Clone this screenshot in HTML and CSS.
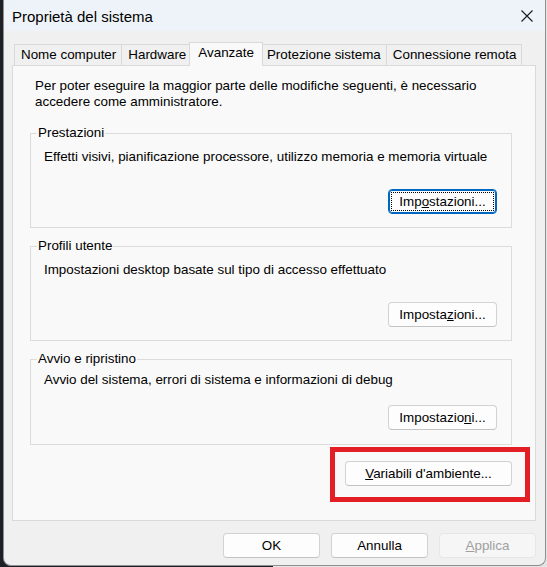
FILE: index.html
```html
<!DOCTYPE html>
<html lang="it">
<head>
<meta charset="utf-8">
<title>Proprietà del sistema</title>
<link rel="stylesheet" href="styles.css">
</head>
<body>
<div class="window">
  <div class="titlebar">
    <span class="title">Proprietà del sistema</span>
    <svg class="close" width="12" height="12" viewBox="0 0 12 12"><path d="M0.5 0.5 L11.5 11.5 M11.5 0.5 L0.5 11.5" stroke="#1a1a1a" stroke-width="1.1" fill="none"/></svg>
  </div>
  <div class="tabs">
    <div class="tab">Nome computer</div>
    <div class="tab">Hardware</div>
    <div class="tab selected">Avanzate</div>
    <div class="tab">Protezione sistema</div>
    <div class="tab">Connessione remota</div>
  </div>
  <div class="panel">
    <p class="intro">Per poter eseguire la maggior parte delle modifiche seguenti, è necessario accedere come amministratore.</p>
    <fieldset class="group">
      <legend>Prestazioni</legend>
      <div class="group-body">
        <p class="desc">Effetti visivi, pianificazione processore, utilizzo memoria e memoria virtuale</p>
        <div class="btn-row"><button class="btn focused">Imp<u>o</u>stazioni...</button></div>
      </div>
    </fieldset>
    <fieldset class="group">
      <legend>Profili utente</legend>
      <div class="group-body">
        <p class="desc">Impostazioni desktop basate sul tipo di accesso effettuato</p>
        <div class="btn-row"><button class="btn">Imposta<u>z</u>ioni...</button></div>
      </div>
    </fieldset>
    <fieldset class="group group-last">
      <legend>Avvio e ripristino</legend>
      <div class="group-body">
        <p class="desc">Avvio del sistema, errori di sistema e informazioni di debug</p>
        <div class="btn-row"><button class="btn">Impostazio<u>n</u>i...</button></div>
      </div>
    </fieldset>
    <div class="env-row"><button class="btn env"><u>V</u>ariabili d'ambiente...</button></div>
  </div>
  <div class="footer">
    <button class="btn dlg">OK</button>
    <button class="btn dlg">Annulla</button>
    <button class="btn dlg disabled"><u>A</u>pplica</button>
  </div>
  <div class="highlight"></div>
</div>
</body>
</html>
```

FILE: styles.css
```css
html, body {
  margin: 0;
  padding: 0;
}
body {
  width: 547px;
  height: 567px;
  overflow: hidden;
  background: linear-gradient(to right, #1d2027 0 50%, #e4e4e4 50% 100%);
  font-family: "Liberation Sans", Arial, sans-serif;
  font-size: 13.4px;
  color: #000;
}
.window {
  position: relative;
  margin-left: 3px;
  width: 543px;
  height: 566px;
  box-sizing: border-box;
  background: #f0f0f0;
  border: 1px solid #8f8f8f;
  border-top: none;
  border-radius: 0 0 8px 8px;
  overflow: hidden;
}
.titlebar {
  height: 31px;
  display: flex;
  align-items: center;
  padding-left: 8px;
  padding-right: 12px;
  background: #eef3f9;
}
.title {
  font-size: 15px;
  flex: 1;
  padding-top: 1px;
}
.close {
  display: block;
}
.tabs {
  display: flex;
  align-items: flex-end;
  height: 23px;
  margin-top: 11px;
  padding-left: 10px;
}
.tab {
  height: 20px;
  line-height: 20px;
  padding: 0 5px 0 6px;
  border: 1px solid #d9d9d9;
  border-bottom: none;
  background: #f0f0f0;
  margin-left: -1px;
  white-space: nowrap;
}
.tab:first-child {
  margin-left: 0;
}
.tab.selected {
  position: relative;
  z-index: 1;
  height: 20px;
  padding: 0 8px 3px 8px;
  margin-left: -3px;
  margin-right: -2px;
  margin-bottom: -1px;
  background: #f9f9f9;
}
.panel {
  margin-left: 8px;
  width: 524px;
  height: 456px;
  box-sizing: border-box;
  background: #f9f9f9;
  border: 1px solid #dadada;
  padding: 12px 23px 0 17px;
}
.intro {
  margin: 0 0 0 5px;
  line-height: 16px;
}
.group {
  margin: 10px 0 0 0;
  padding: 0;
  border: 1px solid #dcdcdc;
  min-width: 0;
}
.intro + .group {
  margin-top: 15px;
}
.group legend {
  margin-left: 6px;
  padding: 0 1px;
  line-height: 16px;
}
.group-body {
  padding: 8px 14px 13px 13px;
}
.group-last .group-body {
  padding-top: 5px;
  padding-bottom: 14px;
}
.desc {
  margin: 0;
  line-height: 16px;
}
.btn-row {
  display: flex;
  justify-content: flex-end;
  margin-top: 24px;
}
.group-last .btn-row {
  margin-top: 17px;
}
.btn {
  position: relative;
  font-family: inherit;
  font-size: 13.4px;
  color: #000;
  height: 25px;
  width: 109px;
  padding: 0;
  background: #fdfdfd;
  border: 1px solid #d2d2d2;
  border-bottom-color: #c3c3c3;
  border-radius: 4px;
}
.btn.focused {
  border: 1px solid #0067c0;
  box-shadow: inset 0 0 0 1px #0067c0;
}
.btn.focused::after {
  content: "";
  position: absolute;
  left: 2px;
  top: 2px;
  right: 2px;
  bottom: 2px;
  border: 1px dotted #000;
}
.env-row {
  display: flex;
  justify-content: flex-end;
  margin-top: 16px;
}
.btn.env {
  width: 167px;
}
.footer {
  display: flex;
  justify-content: flex-end;
  gap: 11px;
  margin-top: 12px;
  padding-right: 9px;
}
.btn.dlg {
  width: 97px;
}
.btn.disabled {
  background: #f6f6f6;
  border-color: #e6e6e6;
  color: #a0a0a0;
}
.highlight {
  position: absolute;
  left: 326px;
  top: 447px;
  width: 200px;
  height: 55px;
  box-sizing: border-box;
  border: 5px solid #e31e24;
}
```
